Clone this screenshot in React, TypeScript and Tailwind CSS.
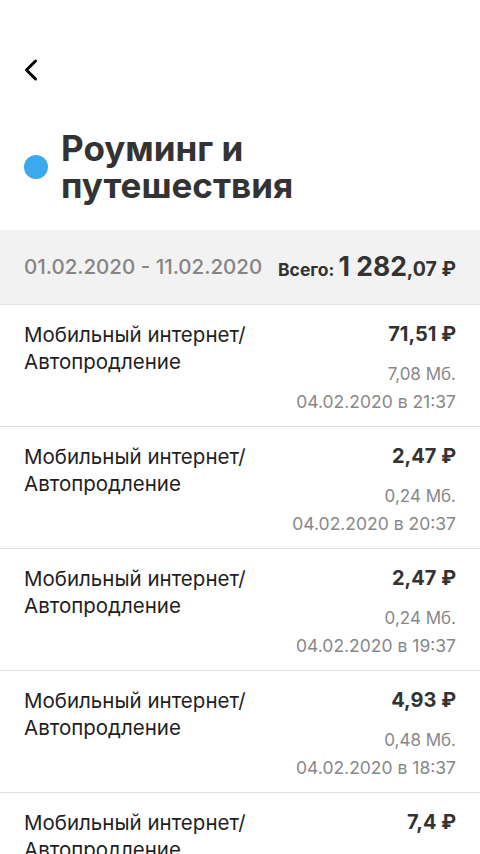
import { ChevronLeft } from 'lucide-react'

const items = [
  { amount: '71,51 ₽', volume: '7,08 Мб.', date: '04.02.2020 в 21:37' },
  { amount: '2,47 ₽', volume: '0,24 Мб.', date: '04.02.2020 в 20:37' },
  { amount: '2,47 ₽', volume: '0,24 Мб.', date: '04.02.2020 в 19:37' },
  { amount: '4,93 ₽', volume: '0,48 Мб.', date: '04.02.2020 в 18:37' },
  { amount: '7,4 ₽', volume: '0,73 Мб.', date: '04.02.2020 в 17:37' },
]

export default function App() {
  return (
    <div className="h-[854px] w-[480px] overflow-hidden bg-white font-['Inter','Noto_Sans',sans-serif] text-[#333]">
      <div className="px-[13px] pt-[52px]">
        <ChevronLeft className="h-9 w-9 text-black" strokeWidth={2} />
      </div>

      <div className="mt-[42px] flex items-center gap-[13px] px-6">
        <span className="h-6 w-6 shrink-0 rounded-full bg-[#3aa9ee]" />
        <h1 className="text-[35px] font-bold leading-[37px] text-[#333]">
          Роуминг и<br />путешествия
        </h1>
      </div>

      <div className="mt-[26px] flex h-[75px] items-center justify-between border-b border-[#e2e2e2] bg-[#f2f2f2] px-6">
        <span className="text-[20.5px] font-medium text-[#858585]">01.02.2020 - 11.02.2020</span>
        <span className="font-bold text-[#333]">
          <span className="text-[17.5px]">Всего: </span>
          <span className="text-[26.5px]">1 282</span>
          <span className="text-[19.5px]">,07 ₽</span>
        </span>
      </div>

      {items.map((it, i) => (
        <div key={i} className="flex h-[122px] justify-between border-b border-[#dedede] px-6 pt-[16px]">
          <div className="text-[20.5px] leading-[27px] text-[#1f1f1f]">
            Мобильный интернет/
            <br />
            Автопродление
          </div>
          <div className="flex flex-col items-end">
            <span className="text-[20px] font-bold leading-[27px] text-[#333]">{it.amount}</span>
            <span className="mt-[12px] text-[17px] leading-[28px] text-[#888]">{it.volume}</span>
            <span className="text-[17.5px] leading-[28px] text-[#888]">{it.date}</span>
          </div>
        </div>
      ))}
    </div>
  )
}
